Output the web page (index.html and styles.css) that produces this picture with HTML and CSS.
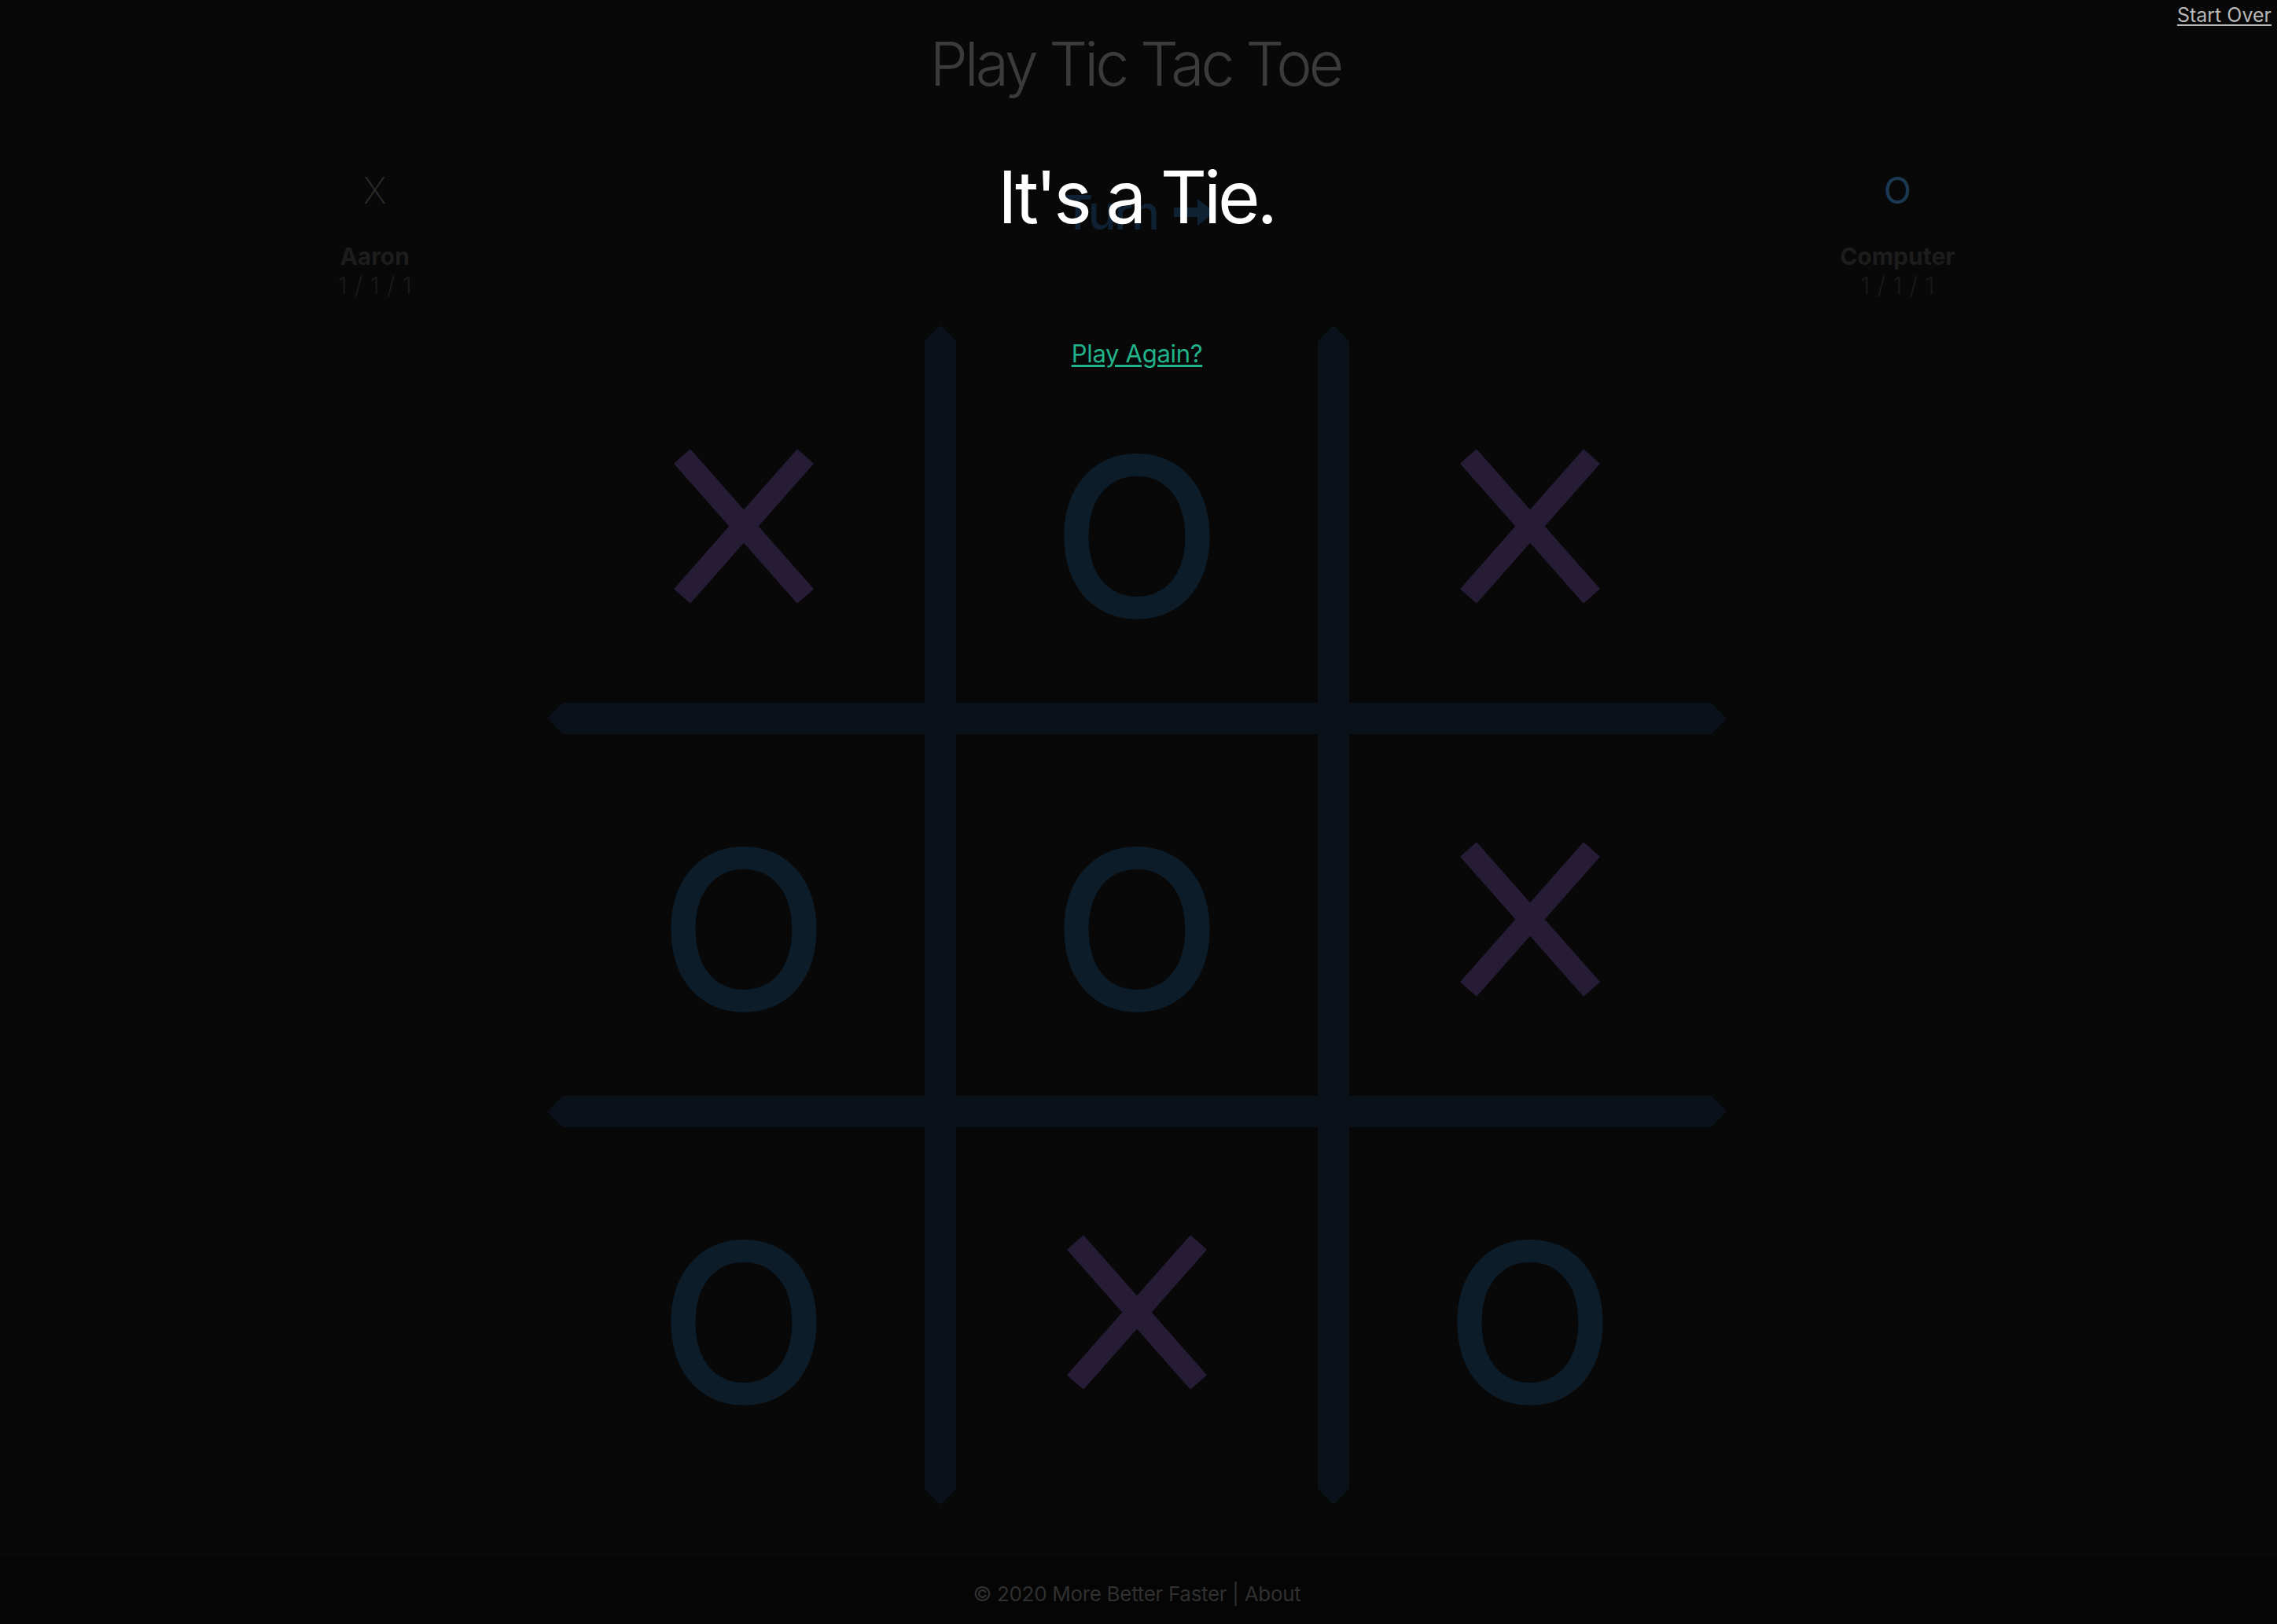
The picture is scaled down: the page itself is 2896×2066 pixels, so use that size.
FILE: index.html
```html
<!DOCTYPE html>
<html lang="en">
<head>
<meta charset="utf-8">
<title>Play Tic Tac Toe</title>
<link rel="stylesheet" href="styles.css">
</head>
<body>
<a class="start-over" href="#">Start Over</a>

<main class="game">
  <h1 class="title">Play Tic Tac Toe</h1>

  <section class="players">
    <div class="player player-x">
      <div class="player-mark">X</div>
      <div class="player-name">Aaron</div>
      <div class="player-score">1 / 1 / 1</div>
    </div>
    <div class="turn">
      <span class="turn-label">Turn</span>
      <svg class="turn-arrow" viewBox="0 0 52 34" width="52" height="34" aria-hidden="true">
        <polygon points="0,11 30,11 30,0 52,17 30,34 30,23 0,23"/>
      </svg>
    </div>
    <div class="player player-o">
      <div class="player-mark">O</div>
      <div class="player-name">Computer</div>
      <div class="player-score">1 / 1 / 1</div>
    </div>
  </section>

  <section class="board">
    <svg class="board-lines" viewBox="0 0 1500 1500" width="1500" height="1500" aria-hidden="true">
      <polygon points="480,20 500,0 520,20 520,1480 500,1500 480,1480"/>
      <polygon points="980,20 1000,0 1020,20 1020,1480 1000,1500 980,1480"/>
      <polygon points="20,480 0,500 20,520 1480,520 1500,500 1480,480"/>
      <polygon points="20,980 0,1000 20,1020 1480,1020 1500,1000 1480,980"/>
    </svg>
    <div class="cell"><svg class="mark-x" viewBox="0 0 178 197"><line x1="10.5" y1="9.5" x2="167.5" y2="187.5"/><line x1="167.5" y1="9.5" x2="10.5" y2="187.5"/></svg></div>
    <div class="cell"><span class="mark-o">O</span></div>
    <div class="cell"><svg class="mark-x" viewBox="0 0 178 197"><line x1="10.5" y1="9.5" x2="167.5" y2="187.5"/><line x1="167.5" y1="9.5" x2="10.5" y2="187.5"/></svg></div>
    <div class="cell"><span class="mark-o">O</span></div>
    <div class="cell"><span class="mark-o">O</span></div>
    <div class="cell"><svg class="mark-x" viewBox="0 0 178 197"><line x1="10.5" y1="9.5" x2="167.5" y2="187.5"/><line x1="167.5" y1="9.5" x2="10.5" y2="187.5"/></svg></div>
    <div class="cell"><span class="mark-o">O</span></div>
    <div class="cell"><svg class="mark-x" viewBox="0 0 178 197"><line x1="10.5" y1="9.5" x2="167.5" y2="187.5"/><line x1="167.5" y1="9.5" x2="10.5" y2="187.5"/></svg></div>
    <div class="cell"><span class="mark-o">O</span></div>
  </section>
</main>

<div class="result">
  <h2 class="result-title">It's a Tie.</h2>
  <a class="play-again" href="#">Play Again?</a>
</div>

<footer class="footer">© 2020 More Better Faster | <a class="footer-link" href="#">About</a></footer>
</body>
</html>
```

FILE: styles.css
```css
* {
  box-sizing: border-box;
}

html,
body {
  margin: 0;
  padding: 0;
}

body {
  position: relative;
  min-height: 100vh;
  display: flex;
  flex-direction: column;
  background: #080808;
  font-family: Inter, "Noto Sans", sans-serif;
  color: #3b3b3b;
}

.start-over {
  position: absolute;
  top: 4px;
  right: 7px;
  font-size: 25px;
  line-height: 30px;
  color: #b8b8b8;
  text-decoration: underline;
  text-underline-offset: 3px;
}

.game {
  flex: 1;
  display: flex;
  flex-direction: column;
  align-items: center;
}

.title {
  margin: 34px 8px 0 0;
  font-size: 77px;
  line-height: 94px;
  font-weight: 300;
  letter-spacing: -0.052em;
  color: #3b3b3b;
}

.players {
  width: 100%;
  margin-top: 86px;
  display: grid;
  grid-template-columns: 1fr 1fr 1fr;
}

.player {
  display: flex;
  flex-direction: column;
  align-items: center;
}

.player-x {
  padding-right: 12px;
}

.player-mark {
  font-size: 46px;
  line-height: 56px;
  font-weight: 300;
  margin-bottom: 39px;
}

.player-x .player-mark {
  font-weight: 200;
  color: #2a2a2a;
}

.player-o .player-mark {
  color: #1b3953;
  font-weight: 400;
}

.player-name {
  font-size: 30px;
  line-height: 35px;
  font-weight: 700;
  color: #1d1d1d;
}

.player-score {
  font-size: 30px;
  line-height: 38px;
  font-weight: 300;
  color: #1a1a1a;
  word-spacing: 1px;
}

.turn {
  padding-top: 20px;
  display: flex;
  justify-content: center;
  align-items: flex-start;
  gap: 20px;
  color: #0f2233;
}

.turn-label {
  font-size: 60px;
  line-height: 72px;
  font-weight: 500;
  letter-spacing: -0.04em;
}

.turn-arrow {
  margin-top: 19px;
  fill: #0f2233;
}

.board {
  position: relative;
  margin-top: 52px;
  margin-right: 4px;
  width: 1460px;
  height: 1460px;
  display: grid;
  grid-template-columns: repeat(3, 460px);
  grid-template-rows: repeat(3, 460px);
  gap: 40px;
}

.board-lines {
  position: absolute;
  left: -20px;
  top: -20px;
  fill: #0b1119;
}

.cell {
  position: relative;
  display: flex;
  align-items: center;
  justify-content: center;
}

.mark-x {
  width: 178px;
  height: 197px;
  margin-top: 11px;
  stroke: #261c36;
  stroke-width: 28;
  fill: none;
}

.mark-o {
  font-size: 282px;
  line-height: 1;
  font-weight: 500;
  color: #0c1c29;
  margin-top: 38px;
}

.result {
  position: absolute;
  top: 0;
  left: 0;
  right: 0;
  padding-top: 194px;
  display: flex;
  flex-direction: column;
  align-items: center;
}

.result-title {
  margin: 0 6px 0 0;
  font-size: 92px;
  line-height: 114px;
  font-weight: 400;
  letter-spacing: -0.045em;
  color: #ffffff;
}

.play-again {
  margin-top: 123px;
  margin-right: 4px;
  font-size: 31px;
  line-height: 38px;
  letter-spacing: -0.01em;
  color: #21b48a;
  text-decoration: underline;
  text-underline-offset: 3px;
}

.footer {
  padding: 30px 4px 22px 0;
  text-align: center;
  font-size: 26px;
  line-height: 32px;
  letter-spacing: -0.012em;
  background: #050505;
  color: #303030;
}

.footer-link {
  color: inherit;
  text-decoration: none;
}
```
